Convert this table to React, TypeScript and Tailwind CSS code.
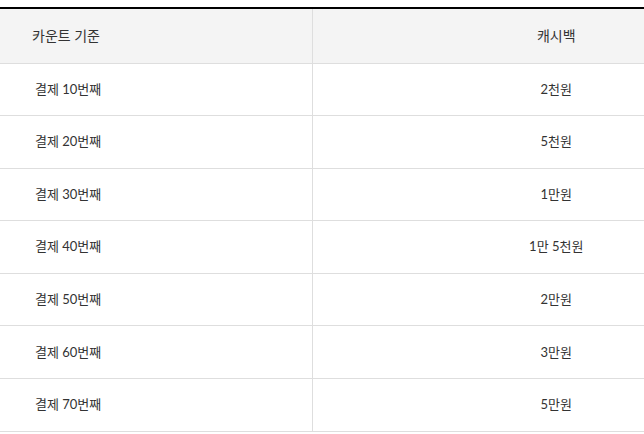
const rows = [
  { count: "결제 10번째", cash: "2천원" },
  { count: "결제 20번째", cash: "5천원" },
  { count: "결제 30번째", cash: "1만원" },
  { count: "결제 40번째", cash: "1만 5천원" },
  { count: "결제 50번째", cash: "2만원" },
  { count: "결제 60번째", cash: "3만원" },
  { count: "결제 70번째", cash: "5만원" },
];

export default function App() {
  return (
    <div
      className="w-[644px] h-[434px] overflow-hidden bg-white pt-[7px]"
      style={{ fontFamily: 'Lato, "Noto Sans CJK KR", sans-serif' }}
    >
      <table className="w-[800px] border-collapse table-fixed border-t-2 border-black text-[#333]">
        <colgroup>
          <col className="w-[312px]" />
          <col />
        </colgroup>
        <thead>
          <tr className="h-[55px] bg-[#f4f4f4] border-b border-[#dedede]">
            <th className="text-left font-normal text-[14px] pl-[32px] border-r border-[#dedede]">
              카운트 기준
            </th>
            <th className="text-center font-normal text-[14px]">캐시백</th>
          </tr>
        </thead>
        <tbody>
          {rows.map((r) => (
            <tr key={r.count} className="h-[52.6px] border-b border-[#dedede]">
              <td className="pl-[35px] text-[13px] border-r border-[#dedede]">{r.count}</td>
              <td className="text-center text-[13px]">{r.cash}</td>
            </tr>
          ))}
        </tbody>
      </table>
    </div>
  );
}
